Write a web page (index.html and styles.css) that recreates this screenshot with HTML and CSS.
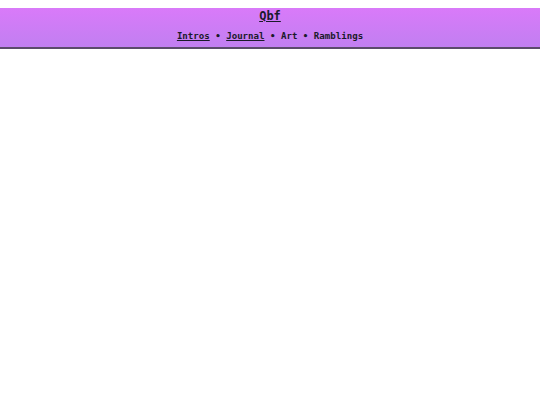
FILE: index.html
```html
<!DOCTYPE html>
<html>
<head>
<meta charset="utf-8">
<link rel="stylesheet" href="styles.css">
</head>
<body>
<header class="site-header">
  <h1 class="site-title"><a href="#">Qbf</a></h1>
  <nav class="site-nav">
    <a href="#">Intros</a> • <a href="#">Journal</a> • <span>Art</span> • <span>Ramblings</span>
  </nav>
</header>
</body>
</html>
```

FILE: styles.css
```css
html, body {
  margin: 0;
  padding: 0;
  background: #ffffff;
}
body {
  font-family: "DejaVu Sans Mono", monospace;
  color: #1a1a2a;
}
.site-header {
  margin-top: 8px;
  background: linear-gradient(to bottom, #d97af9, #c17ff1);
  border-bottom: 2px solid #5b4b6b;
  text-align: center;
  padding: 1px 0 5px;
}
.site-title {
  margin: 0;
  font-size: 12px;
  line-height: 14px;
  font-weight: bold;
}
.site-title a {
  color: #1a1a2a;
  text-decoration: underline;
}
.site-nav {
  margin-top: 7px;
  font-size: 9.1px;
  line-height: 12px;
  font-weight: bold;
}
.site-nav a {
  color: #1a1a2a;
  text-decoration: underline;
}
```
